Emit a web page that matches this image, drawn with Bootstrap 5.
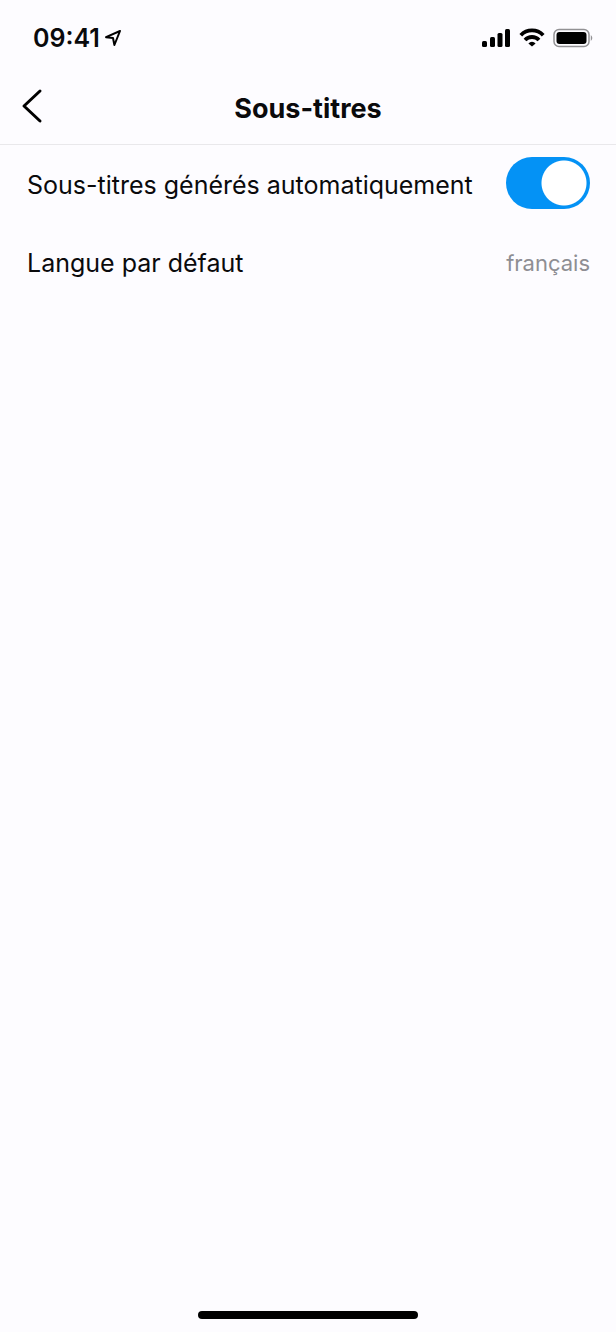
<!DOCTYPE html>
<html lang="fr">
<head>
<meta charset="utf-8">
<meta name="viewport" content="width=device-width, initial-scale=1">
<title>Sous-titres</title>
<link href="https://cdn.jsdelivr.net/npm/bootstrap@5.3.0/dist/css/bootstrap.min.css" rel="stylesheet">
<style>
  body { background: #fdfcff; color: #0a0a0c; font-family: Inter, "Liberation Sans", sans-serif; }
  .status-bar { height: 72px; padding: 4px 23px 0 33px; }
  .clock { font-size: 25px; line-height: 32px; font-weight: 600; }
  .title-bar { height: 73px; border-bottom: 1px solid #e9e8eb; padding: 0 20px; display: grid; grid-template-columns: 32px 1fr 32px; align-items: center; }
  .title-bar h1 { font-size: 27px; line-height: 32px; font-weight: 700; padding-top: 2px; }
  .back { line-height: 0; padding: 0 0 4px; }
  .settings { gap: 2px; }
  .setting { min-height: 76px; padding: 0 26px 0 27px; font-size: 25px; line-height: 32px; color: inherit; }
  .setting-text { padding-top: 3px; }
  .value-text { font-size: 22px; color: #8e8e93; }
  .form-switch .form-check-input.toggle {
    width: 84px; height: 52px; border: 0; border-radius: 26px; background-color: #ccc;
    background-image: radial-gradient(circle closest-side, #fff 22px, transparent 23px);
    background-size: 52px 52px; background-position: left center; background-repeat: no-repeat;
  }
  .form-switch .form-check-input.toggle:checked { background-color: #0492f5; background-position: right center; background-image: radial-gradient(circle closest-side, #fff 22px, transparent 23px); }
  .home-bar { width: 220px; height: 8px; border-radius: 4px; background: #000; margin-bottom: 13px; }
</style>
</head>
<body>
<div class="d-flex flex-column min-vh-100">
  <div class="status-bar d-flex align-items-center justify-content-between">
    <div class="d-flex align-items-center gap-1">
      <span class="clock">09:41</span>
      <svg width="18" height="18" viewBox="0 0 18 18" fill="none" stroke="#000" stroke-width="2" stroke-linejoin="round" aria-hidden="true"><path d="M16 2 2 8.200l7 .8 1.400 7z"/></svg>
    </div>
    <div class="d-flex align-items-center gap-2">
      <svg width="29" height="20" viewBox="0 0 29 20" aria-hidden="true"><rect x="0" y="13" width="5" height="6" rx="1.500"/><rect x="8" y="9" width="5" height="10" rx="1.500"/><rect x="15.500" y="5" width="5" height="14" rx="1.500"/><rect x="23" y="1" width="5" height="18" rx="1.500"/></svg>
      <svg width="26" height="20" viewBox="0 0 26 20" fill="none" stroke="#000" stroke-width="3.800" aria-hidden="true"><path d="M1.800 7.200a15.500 15.500 0 0 1 22.400 0M6 12a9.700 9.700 0 0 1 14 0"/><path d="M13 18.500 9.400 15.400a5 5 0 0 1 7.200 0z" fill="#000" stroke="none"/></svg>
      <svg width="40" height="20" viewBox="0 0 40 20" aria-hidden="true"><rect x="1" y="1.500" width="35" height="17" rx="5" fill="none" stroke="#929194" stroke-width="1.500"/><rect x="3.500" y="4" width="30" height="12" rx="3"/><path d="M37.800 7q3 3 0 6z" fill="#929194"/></svg>
    </div>
  </div>
  <header class="title-bar">
    <button type="button" class="btn border-0 back text-start" aria-label="Retour">
      <svg width="24" height="36" viewBox="0 0 24 36" fill="none" stroke="#000" stroke-width="3" stroke-linecap="round" stroke-linejoin="round"><path d="M20 3 4 18l16 15"/></svg>
    </button>
    <h1 class="m-0 text-center">Sous-titres</h1>
  </header>
  <main class="settings d-flex flex-column flex-grow-1">
    <div class="setting d-flex align-items-center justify-content-between">
      <label class="setting-text" for="auto">Sous-titres générés automatiquement</label>
      <div class="form-check form-switch p-0 m-0 d-flex"><input class="form-check-input toggle m-0 float-none" type="checkbox" role="switch" id="auto" checked></div>
    </div>
    <a href="#langue" class="setting d-flex align-items-center justify-content-between text-decoration-none">
      <span class="setting-text">Langue par défaut</span>
      <span class="setting-text value-text">français</span>
    </a>
  </main>
  <div class="home-bar mx-auto"></div>
</div>
<script src="https://cdn.jsdelivr.net/npm/bootstrap@5.3.0/dist/js/bootstrap.bundle.min.js"></script>
</body>
</html>
